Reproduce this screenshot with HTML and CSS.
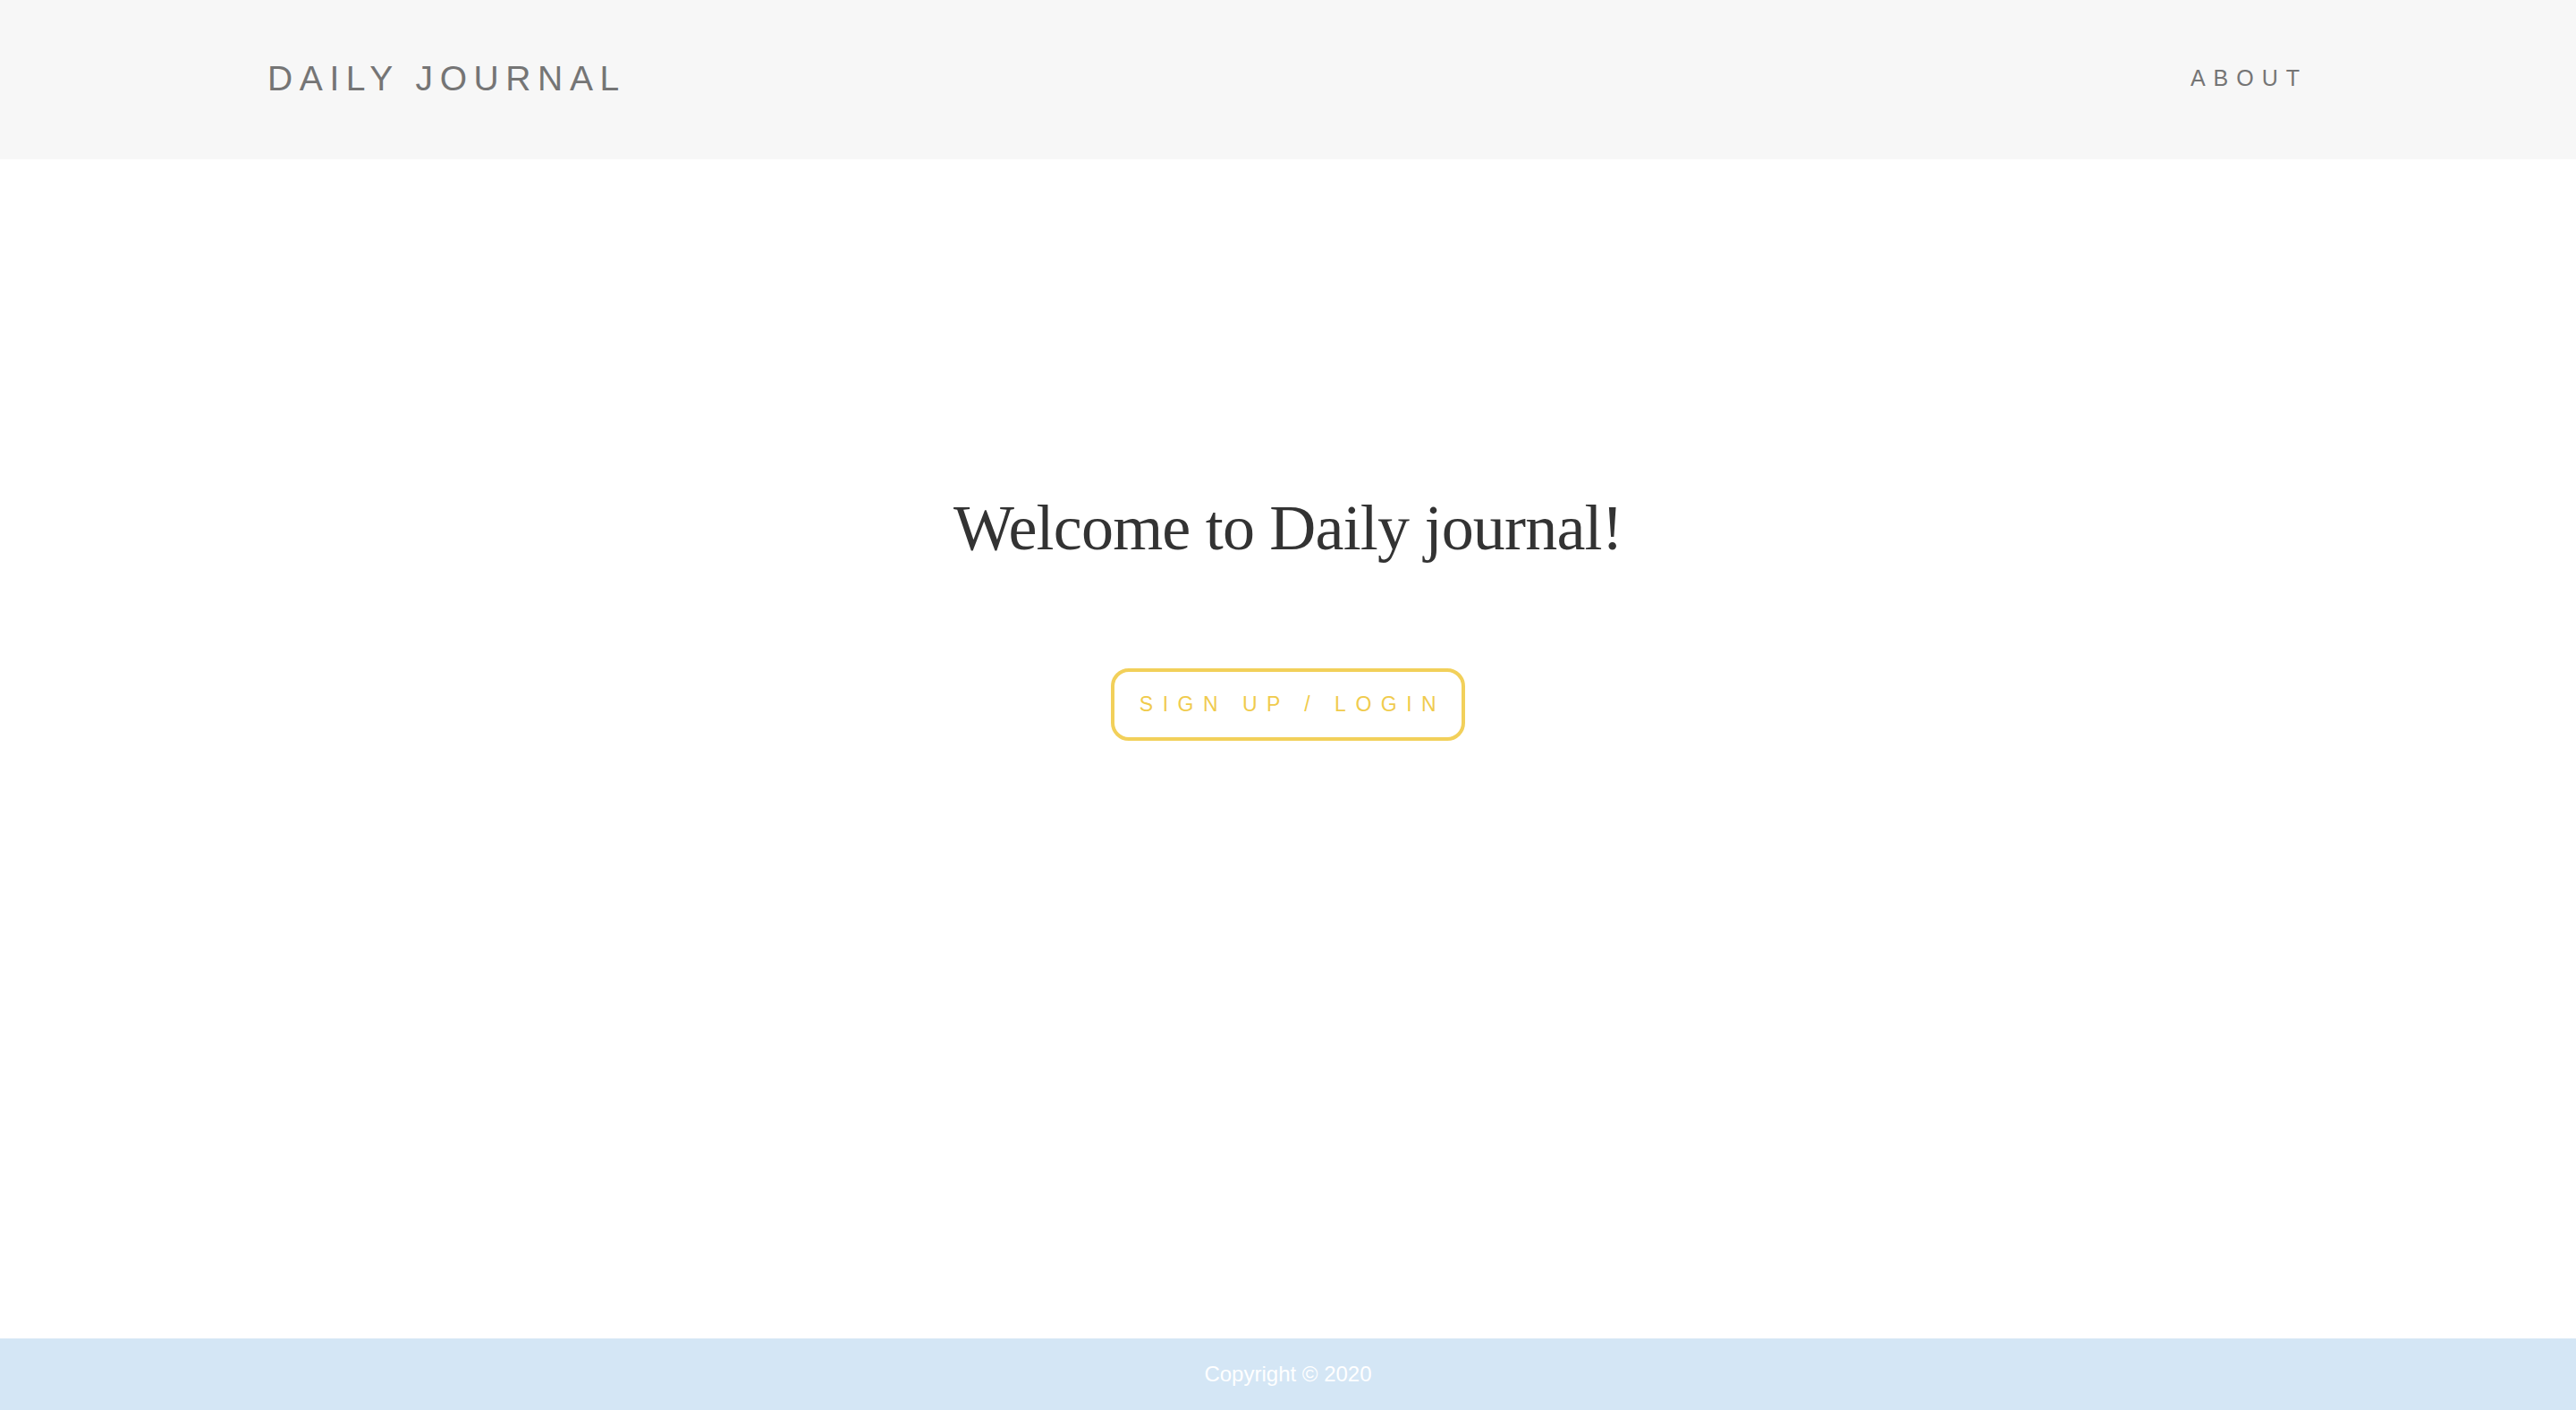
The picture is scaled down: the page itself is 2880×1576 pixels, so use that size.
FILE: index.html
```html
<!DOCTYPE html>
<html lang="en">
<head>
<meta charset="utf-8">
<title>Daily Journal</title>
<link rel="stylesheet" href="styles.css">
</head>
<body>
<div class="page">
  <header class="topbar">
    <a class="brand" href="#">DAILY JOURNAL</a>
    <nav class="nav"><a class="nav-link" href="#">ABOUT</a></nav>
  </header>
  <main class="hero">
    <h1 class="hero-title">Welcome to Daily journal!</h1>
    <a class="cta" href="#">SIGN UP / LOGIN</a>
  </main>
  <footer class="footer">Copyright © 2020</footer>
</div>
</body>
</html>
```
FILE: styles.css
```css
html, body {
  margin: 0;
  padding: 0;
  background: #ffffff;
}
body {
  font-family: "Liberation Sans", Arial, sans-serif;
}
.page {
  min-height: 100vh;
  display: flex;
  flex-direction: column;
}
.topbar {
  height: 178px;
  background: #f7f7f7;
  display: flex;
  align-items: center;
  justify-content: space-between;
  padding: 0 300px 3px 299px;
  box-sizing: border-box;
  flex: 0 0 auto;
}
.brand {
  color: #757575;
  text-decoration: none;
  font-size: 39px;
  letter-spacing: 7.6px;
  line-height: 1;
}
.nav-link {
  color: #757575;
  text-decoration: none;
  font-size: 25px;
  letter-spacing: 9px;
  line-height: 1;
}
.hero {
  flex: 1 1 auto;
  display: flex;
  flex-direction: column;
  align-items: center;
  padding-top: 376px;
}
.hero-title {
  margin: 0;
  font-family: "Liberation Serif", "Times New Roman", serif;
  font-weight: normal;
  font-size: 72px;
  line-height: 72px;
  letter-spacing: -0.8px;
  color: #333333;
  white-space: nowrap;
  text-align: center;
}
.cta {
  margin-top: 121px;
  display: inline-block;
  border: 4px solid #f2d05a;
  border-radius: 20px;
  padding: 0 18px 0 28px;
  height: 73px;
  line-height: 73px;
  font-size: 23px;
  letter-spacing: 10.5px;
  color: #f0cb4c;
  text-decoration: none;
}
.footer {
  flex: 0 0 auto;
  height: 80px;
  line-height: 80px;
  background: #d4e6f5;
  color: #ffffff;
  font-size: 24px;
  text-align: center;
}
```
